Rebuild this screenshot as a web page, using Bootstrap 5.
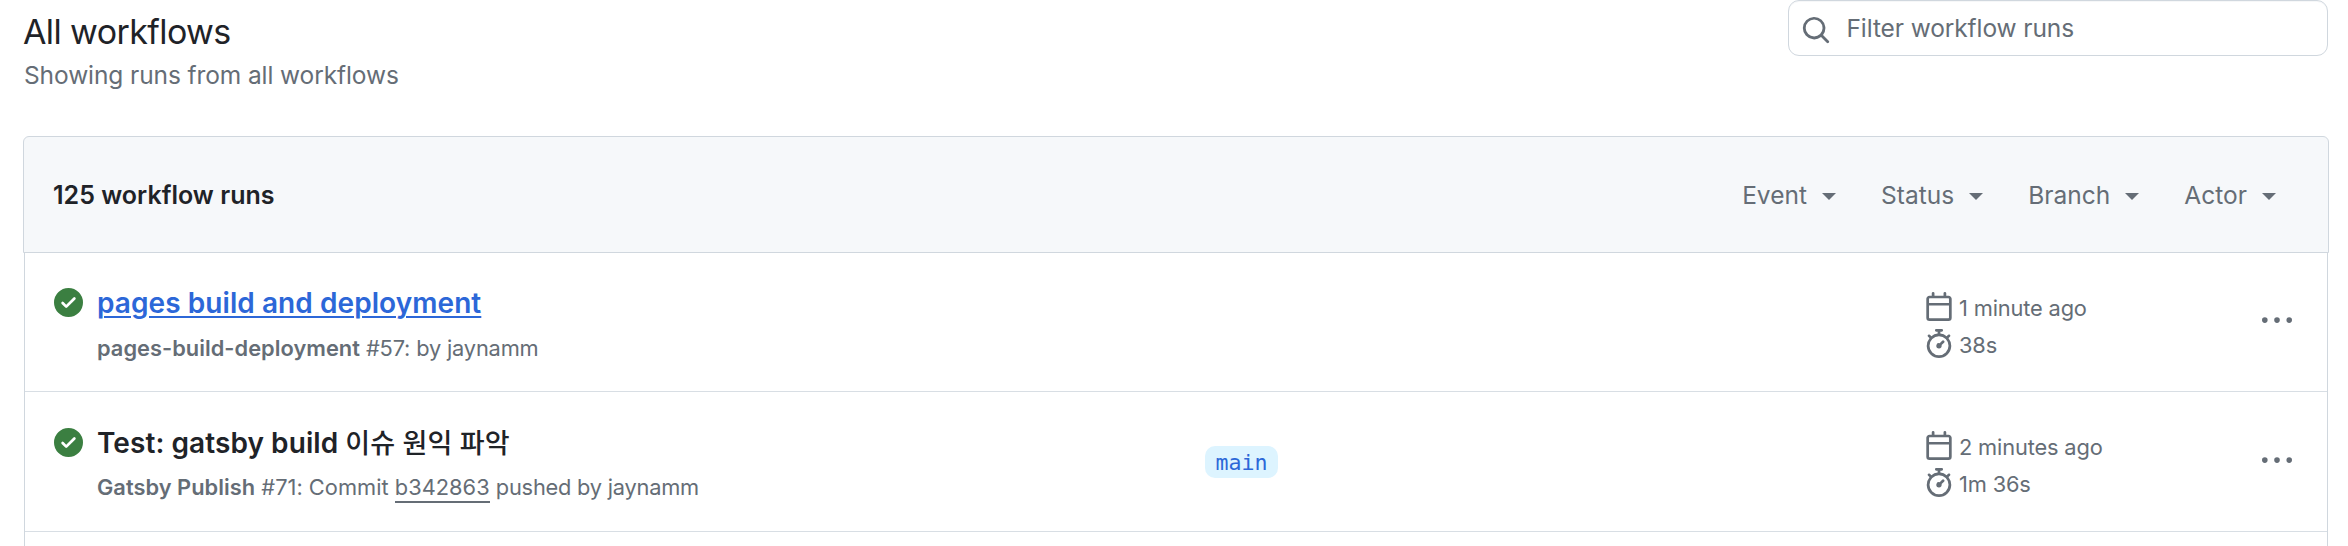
<!DOCTYPE html>
<html lang="en">
<head>
<meta charset="utf-8">
<meta name="viewport" content="width=device-width, initial-scale=1">
<title>All workflows</title>
<link rel="stylesheet" href="https://cdn.jsdelivr.net/npm/bootstrap@5.3.0/dist/css/bootstrap.min.css">
<style>
  body { font-family: Inter, "Noto Sans CJK KR", sans-serif; color: #1f2328; background: #fff; overflow: hidden; height: 546px; }
  svg { fill: currentColor; display: block; flex: none; }
  .tone { color: #656d76; }
  .page-top { height: 136px; padding: 0 20px 0 23px; }
  .page-title { font-size: 34px; line-height: 45px; margin: 9px 0 1px; font-weight: 400; letter-spacing: -.6px; }
  .page-sub { font-size: 24.5px; line-height: 41px; letter-spacing: -.1px; padding-left: 1px; }
  .filter-box { width: 540px; height: 56px; border: 1px solid #d0d7de; border-radius: 11px; padding-left: 12px; box-shadow: inset 0 1px 0 rgba(208,215,222,.2); }
  .filter-box svg { margin-top: 4px; }
  .filter-box input { font-size: 24.5px; line-height: 30px; letter-spacing: -.1px; margin-left: 15.5px; padding: 0; color: #656d76; }
  .filter-box input::placeholder { color: #656d76; opacity: 1; }
  .runs { margin: 0 19px 0 23px; }
  .runs-head { height: 117px; background: #f6f8fa; border: 1px solid #d0d7de; border-radius: 6px 6px 0 0; padding: 2px 52px 0 29px; font-size: 24.5px; }
  .runs-count { font-size: 25px; letter-spacing: .02px; }
  .menu { gap: 45px; letter-spacing: .02px; }
  .menu .dropdown-toggle::after { border-top: 7px solid; border-right: 7px solid transparent; border-left: 7px solid transparent; margin: 0 0 0 15px; vertical-align: 4px; }
  .runs-body { margin: 0 1px; border: 1px solid #d0d7de; border-width: 0 1px; height: 293px; }
  .run { height: 139px; border-bottom: 1px solid #d8dee4; padding: 32px 31px 0 29px; }
  .run + .run { height: 140px; padding-top: 33px; }
  .run-main { flex: 0 0 1108px; }
  .run-title { font-size: 28px; line-height: 36px; font-weight: 600; margin: 0 0 9px; letter-spacing: .07px; white-space: nowrap; }
  .run + .run .run-title { height: 36px; margin-bottom: 8px; }
  .run-title a, .branch { color: #2c67d8; }
  .run-title a { text-decoration-thickness: 2px; text-underline-offset: 3px; }
  .hangul { font-size: 27px; font-weight: 500; letter-spacing: .1px; }
  .run-sub { font-size: 21.8px; line-height: 36px; letter-spacing: -.17px; }
  .run + .run .run-sub { letter-spacing: .03px; }
  .run + .run .run-sub .by { letter-spacing: -.22px; }
  .run-sub b { letter-spacing: .04px; }
  .sha { border-bottom: 2px solid #656d76; padding-bottom: 1px; }
  .state { color: #3b7f41; margin: 3px 14px 0 0; }
  .branch-col { flex: 0 0 719px; padding-top: 21px; }
  .branch { display: inline-block; background: #ddf4ff; border-radius: 10px; font: 21.6px/33px "DejaVu Sans Mono", monospace; padding: 0 10.5px; height: 32px; vertical-align: top; }
  .when { font-size: 21.8px; line-height: 34px; letter-spacing: -.15px; flex: 0 0 338px; padding-top: 7px; }
  .run + .run .when { padding-top: 6px; }
  .when div { height: 37px; gap: 5px; }
  .when span { margin-top: -1px; }
  .more { margin-top: 21px; }
</style>
</head>
<body>
<svg class="d-none" aria-hidden="true">
  <symbol id="check" viewBox="0 0 16 16"><path d="M8 16A8 8 0 1 1 8 0a8 8 0 0 1 0 16Zm3.78-9.72a.751.751 0 0 0-.018-1.042.751.751 0 0 0-1.042-.018L6.75 9.19 5.28 7.72a.751.751 0 0 0-1.042.018.751.751 0 0 0-.018 1.042l2 2a.75.75 0 0 0 1.06 0Z"/></symbol>
  <symbol id="calendar" viewBox="0 0 16 16"><path d="M4.75 0a.75.75 0 0 1 .75.75V2h5V.75a.75.75 0 0 1 1.5 0V2h1.25c.966 0 1.75.784 1.75 1.75v10.5A1.75 1.75 0 0 1 13.25 16H2.75A1.75 1.75 0 0 1 1 14.25V3.75C1 2.784 1.784 2 2.75 2H4V.75A.75.75 0 0 1 4.75 0ZM2.5 7.5v6.75c0 .138.112.25.25.25h10.5a.25.25 0 0 0 .25-.25V7.5Zm10.75-4H2.75a.25.25 0 0 0-.25.25V6h11V3.75a.25.25 0 0 0-.25-.25Z"/></symbol>
  <symbol id="stopwatch" viewBox="0 0 16 16"><path d="M5.75.75A.75.75 0 0 1 6.5 0h3a.75.75 0 0 1 0 1.5h-.75v1l-.001.041a6.724 6.724 0 0 1 3.464 1.435l.007-.006.75-.75a.749.749 0 0 1 1.275.326.749.749 0 0 1-.215.734l-.75.75-.006.007a6.75 6.75 0 1 1-10.548 0L2.72 5.03l-.75-.75a.751.751 0 0 1 .018-1.042.751.751 0 0 1 1.042-.018l.75.75.007.006A6.72 6.72 0 0 1 7.25 2.541V1.5H6.5a.75.75 0 0 1-.75-.75ZM8 14.5a5.25 5.25 0 1 0-.001-10.501A5.25 5.25 0 0 0 8 14.5Zm.389-6.7 1.33-1.33a.75.75 0 1 1 1.061 1.06L9.45 8.861A1.503 1.503 0 0 1 8 10.75a1.499 1.499 0 1 1 .389-2.95Z"/></symbol>
  <symbol id="kebab" viewBox="0 0 16 16"><path d="M8 9a1.5 1.5 0 1 0 0-3 1.5 1.5 0 0 0 0 3ZM1.5 9a1.5 1.5 0 1 0 0-3 1.5 1.5 0 0 0 0 3Zm13 0a1.5 1.5 0 1 0 0-3 1.5 1.5 0 0 0 0 3Z"/></symbol>
</svg>
<header class="page-top d-flex justify-content-between align-items-start">
  <div>
    <h1 class="page-title">All workflows</h1>
    <div class="page-sub tone">Showing runs from all workflows</div>
  </div>
  <label class="filter-box d-flex align-items-center tone">
    <svg width="30" height="30" viewBox="0 0 16 16"><path d="M10.68 11.74a6 6 0 0 1-7.922-8.982 6 6 0 0 1 8.982 7.922l3.04 3.04a.749.749 0 0 1-.326 1.275.749.749 0 0 1-.734-.215ZM11.5 7a4.499 4.499 0 1 0-8.997 0A4.499 4.499 0 0 0 11.5 7Z"/></svg>
    <input class="border-0 bg-transparent flex-grow-1" type="text" placeholder="Filter workflow runs">
  </label>
</header>
<main class="runs">
  <div class="runs-head d-flex justify-content-between align-items-center">
    <strong class="runs-count fw-semibold">125 workflow runs</strong>
    <nav class="menu d-flex tone">
      <span class="dropdown-toggle">Event</span>
      <span class="dropdown-toggle">Status</span>
      <span class="dropdown-toggle">Branch</span>
      <span class="dropdown-toggle">Actor</span>
    </nav>
  </div>
  <div class="runs-body">
    <article class="run d-flex align-items-start">
      <svg class="state" width="29" height="29"><use href="#check"/></svg>
      <div class="run-main">
        <h2 class="run-title"><a href="#">pages build and deployment</a></h2>
        <div class="run-sub tone"><b class="fw-semibold">pages-build-deployment</b> #57: by jaynamm</div>
      </div>
      <div class="branch-col"></div>
      <div class="when tone">
        <div class="d-flex"><svg width="30" height="29"><use href="#calendar"/></svg><span>1 minute ago</span></div>
        <div class="d-flex"><svg width="30" height="29"><use href="#stopwatch"/></svg><span>38s</span></div>
      </div>
      <svg class="more tone" width="30" height="30"><use href="#kebab"/></svg>
    </article>
    <article class="run d-flex align-items-start">
      <svg class="state" width="29" height="29"><use href="#check"/></svg>
      <div class="run-main">
        <h2 class="run-title">Test: gatsby build <span class="hangul">이슈 원익 파악</span></h2>
        <div class="run-sub tone"><b class="fw-semibold">Gatsby Publish</b> #71: Commit <span class="sha">b342863</span> <span class="by">pushed by jaynamm</span></div>
      </div>
      <div class="branch-col"><span class="branch">main</span></div>
      <div class="when tone">
        <div class="d-flex"><svg width="30" height="29"><use href="#calendar"/></svg><span>2 minutes ago</span></div>
        <div class="d-flex"><svg width="30" height="29"><use href="#stopwatch"/></svg><span>1m 36s</span></div>
      </div>
      <svg class="more tone" width="30" height="30"><use href="#kebab"/></svg>
    </article>
  </div>
</main>
<script src="https://cdn.jsdelivr.net/npm/bootstrap@5.3.0/dist/js/bootstrap.bundle.min.js"></script>
</body>
</html>
